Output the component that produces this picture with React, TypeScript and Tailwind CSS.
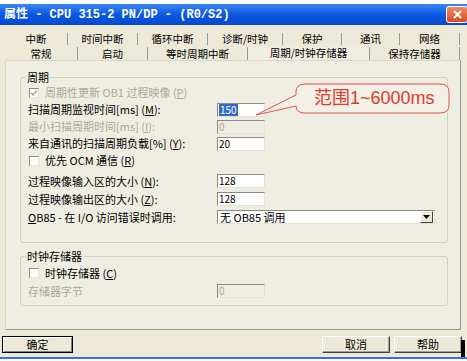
import React from "react";

const FONT = { fontFamily: '"Noto Sans CJK SC", "Noto Sans", sans-serif' };

const row1 = [
  { label: "中断", w: 63 },
  { label: "时间中断", w: 70 },
  { label: "循环中断", w: 70 },
  { label: "诊断/时钟", w: 75 },
  { label: "保护", w: 59 },
  { label: "通讯", w: 58 },
  { label: "网络", w: 60 },
];

const row2 = [
  { label: "常规", w: 73 },
  { label: "启动", w: 70 },
  { label: "等时周期中断", w: 100 },
  { label: "周期/时钟存储器", w: 122, active: true },
  { label: "保持存储器", w: 90 },
];

function Check({ checked, disabled }: { checked?: boolean; disabled?: boolean }) {
  return (
    <span className="w-[10px] h-[10px] shrink-0 bg-white border border-t-[#8c8a80] border-l-[#8c8a80] border-r-[#e4e2d6] border-b-[#e4e2d6] flex items-center justify-center">
      {checked && (
        <svg width="8" height="8" viewBox="0 0 8 8">
          <path d="M1 4 L3 6 L7 1.5" fill="none" stroke={disabled ? "#aca899" : "#000"} strokeWidth="1.6" />
        </svg>
      )}
    </span>
  );
}

function Field({ value, disabled, selected }: { value: string; disabled?: boolean; selected?: boolean }) {
  return (
    <div
      className={`w-[48px] h-[14px] flex items-center pl-[1px] text-[10px] leading-[12px] border border-t-[#8c8a80] border-l-[#8c8a80] border-r-[#e4e2d6] border-b-[#e4e2d6] ${
        disabled ? "bg-[#efede2] text-[#aca899]" : "bg-white text-black"
      }`}
    >
      {selected ? <span className="bg-[#316ac5] text-white px-[1px]">{value}</span> : value}
    </div>
  );
}

function Row({
  h = "h-[17px]",
  children,
  field,
}: {
  h?: string;
  children: React.ReactNode;
  field?: React.ReactNode;
}) {
  return (
    <div className={`${h} grid grid-cols-[189px_1fr] items-center`}>
      <div className="flex items-center text-[11px] leading-[13px] whitespace-nowrap">{children}</div>
      <div className="flex items-center">{field}</div>
    </div>
  );
}

function Button({ label, isDefault, w }: { label: string; isDefault?: boolean; w: string }) {
  return (
    <div
      className={`${w} h-[17px] flex items-center justify-center text-[11px] leading-[13px] text-black bg-[#ece9d8] ${
        isDefault
          ? "border border-black shadow-[inset_1px_1px_0_#fff,inset_-1px_-1px_0_#808080]"
          : "border border-t-white border-l-white border-r-[#404040] border-b-[#404040] shadow-[inset_-1px_-1px_0_#a0a0a0]"
      }`}
    >
      {label}
    </div>
  );
}

export default function App() {
  return (
    <div className="w-[467px] h-[361px] bg-white overflow-hidden relative" style={FONT}>
      <div className="h-[4px]" />

      {/* title bar */}
      <div className="h-[21px] flex items-center justify-between bg-gradient-to-b from-[#3a86f5] via-[#0a58e2] to-[#0749cf]">
        <span
          className="pl-[4px] text-white font-bold text-[12px] leading-[14px] whitespace-pre"
          style={{ fontFamily: '"Liberation Mono", "Noto Sans CJK SC", monospace' }}
        >
          属性 - CPU 315-2 PN/DP - (R0/S2)
        </span>
        <div className="w-[22px] h-[17px] -mr-[1px] rounded-[3px] border border-white bg-gradient-to-b from-[#f08a62] to-[#d6481f] flex items-center justify-center">
          <svg width="11" height="11" viewBox="0 0 11 11">
            <path d="M2 2 L9 9 M9 2 L2 9" stroke="#fff" strokeWidth="2" />
          </svg>
        </div>
      </div>

      <div className="h-[332px] bg-[#ece9d8] flex flex-col">
        {/* tabs */}
        <div className="pt-[8px] pl-[5px] text-[10.5px] leading-[12px] text-black">
          <div className="flex h-[12px]">
            {row1.map((t) => (
              <div
                key={t.label}
                className="h-full flex items-center justify-center border-r border-[#919b9c]"
                style={{ width: t.w }}
              >
                {t.label}
              </div>
            ))}
          </div>
          <div className="flex h-[13px] mt-[2px]">
            {row2.map((t) => (
              <div
                key={t.label}
                className={`h-full flex justify-center border-r border-[#919b9c] ${
                  t.active ? "items-start bg-[#efede2]" : "items-end"
                }`}
                style={{ width: t.w }}
              >
                {t.label}
              </div>
            ))}
          </div>
        </div>

        {/* tab page */}
        <div className="ml-[5px] w-[456px] h-[270px] bg-[#efede2] border border-t-[#d8d6ca] border-l-[#d8d6ca] border-r-[#919b9c] border-b-[#919b9c] relative">
          <fieldset className="ml-[14px] mt-[10px] w-[428px] h-[172px] border border-[#d0d0bf] rounded-[3px] pl-[7px]">
            <legend className="text-[11px] leading-[12px] px-[1px] -ml-[2px]">周期</legend>
            <div className="pt-[1px]">
              <Row>
                <span className="flex items-center text-[#aca899]">
                  <span className="ml-[1px] mr-[6px]">
                    <Check checked disabled />
                  </span>
                  周期性更新 OB1 过程映像 (<u>P</u>)
                </span>
              </Row>
              <Row field={<Field value="150" selected />}>
                扫描周期监视时间[ms] (<u>M</u>):
              </Row>
              <Row field={<Field value="0" disabled />}>
                <span className="text-[#aca899]">
                  最小扫描周期时间[ms] (<u>I</u>):
                </span>
              </Row>
              <Row field={<Field value="20" />}>
                来自通讯的扫描周期负载[%] (<u>Y</u>):
              </Row>
              <Row>
                <span className="ml-[1px] mr-[6px]">
                  <Check />
                </span>
                优先 OCM 通信 (<u>R</u>)
              </Row>
              <div className="mt-[3px]">
                <Row h="h-[18px]" field={<Field value="128" />}>
                  过程映像输入区的大小 (<u>N</u>):
                </Row>
                <Row h="h-[18px]" field={<Field value="128" />}>
                  过程映像输出区的大小 (<u>Z</u>):
                </Row>
                <Row
                  h="h-[18px]"
                  field={
                    <div className="w-[218px] h-[14px] flex items-center justify-between bg-white border border-t-[#8c8a80] border-l-[#8c8a80] border-r-[#e4e2d6] border-b-[#e4e2d6]">
                      <span className="pl-[2px] text-[11px] leading-[12px]">无 OB85 调用</span>
                      <span className="w-[13px] h-[12px] mr-[1px] bg-[#ece9d8] border border-t-white border-l-white border-r-[#404040] border-b-[#404040] flex items-center justify-center">
                        <svg width="7" height="4" viewBox="0 0 7 4">
                          <path d="M0 0 L7 0 L3.5 4 Z" fill="#000" />
                        </svg>
                      </span>
                    </div>
                  }
                >
                  <u>O</u>B85 - 在 I/O 访问错误时调用:
                </Row>
              </div>
            </div>
          </fieldset>

          <fieldset className="ml-[14px] mt-[7px] w-[428px] h-[56px] border border-[#d0d0bf] rounded-[3px] pl-[7px]">
            <legend className="text-[11px] leading-[12px] px-[1px] -ml-[2px]">时钟存储器</legend>
            <div className="pt-[2px]">
              <Row h="h-[18px]">
                <span className="ml-[1px] mr-[6px]">
                  <Check />
                </span>
                时钟存储器 (<u>C</u>)
              </Row>
              <Row h="h-[18px]" field={<Field value="0" disabled />}>
                <span className="text-[#aca899]">存储器字节</span>
              </Row>
            </div>
          </fieldset>

          {/* callout */}
          <div className="absolute left-[245px] top-[20px] w-[200px] h-[36px]">
            <svg width="200" height="36" viewBox="0 0 200 36" className="absolute inset-0">
              <path
                d="M45 14 L45 11 Q45 3 54 3 L189 3 Q198 3 198 11 L198 24 Q198 32 189 32 L54 32 Q45 32 45 25 L5 34 Z"
                fill="#f2f0e6"
                stroke="#d9534f"
                strokeWidth="1"
              />
            </svg>
            <span
              className="absolute left-[63px] top-[6px] text-[18px] leading-[22px] text-[#e0392e] whitespace-nowrap"
              style={{ fontFamily: '"Liberation Sans", "Noto Sans CJK SC", sans-serif' }}
            >
              范围1~6000ms
            </span>
          </div>
        </div>

        {/* buttons */}
        <div className="mt-[6px] flex pl-[2px] pr-[5px]">
          <Button label="确定" isDefault w="w-[71px]" />
          <div className="ml-auto flex gap-[4px]">
            <Button label="取消" w="w-[68px]" />
            <Button label="帮助" w="w-[68px]" />
          </div>
        </div>
      </div>

      <div className="h-[2px] bg-[#3a6ee0]" />

      <div className="absolute left-[461px] top-[340px] w-[4px] h-[17px] bg-black" />
    </div>
  );
}
